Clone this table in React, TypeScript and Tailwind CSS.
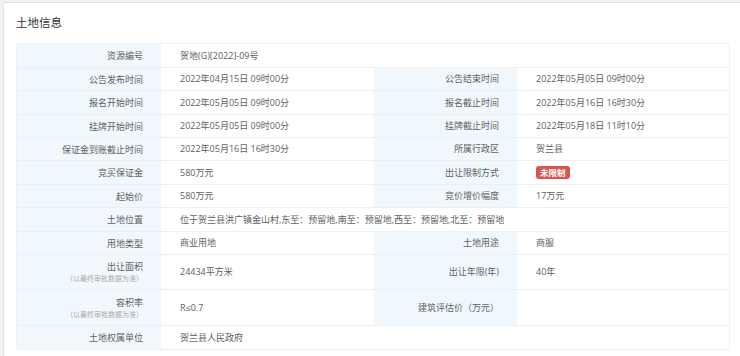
import React from "react";

type Cell = { label: React.ReactNode; value?: React.ReactNode };

const Note = () => (
  <span className="block text-[7px] leading-[11px] text-[#aaa]">（以最终审批数据为准）</span>
);

const Badge = ({ children }: { children: React.ReactNode }) => (
  <span className="inline-block rounded-[3px] bg-[#d9534f] px-[4px] text-[8.5px] font-bold leading-[13px] text-white">
    {children}
  </span>
);

const rows: { cells: Cell[]; h: string }[] = [
  { cells: [{ label: "资源编号", value: "贺地(G)[2022]-09号" }], h: "h-[24px]" },
  {
    cells: [
      { label: "公告发布时间", value: "2022年04月15日 09时00分" },
      { label: "公告结束时间", value: "2022年05月05日 09时00分" },
    ],
    h: "h-[23px]",
  },
  {
    cells: [
      { label: "报名开始时间", value: "2022年05月05日 09时00分" },
      { label: "报名截止时间", value: "2022年05月16日 16时30分" },
    ],
    h: "h-[24px]",
  },
  {
    cells: [
      { label: "挂牌开始时间", value: "2022年05月05日 09时00分" },
      { label: "挂牌截止时间", value: "2022年05月18日 11时10分" },
    ],
    h: "h-[23px]",
  },
  {
    cells: [
      { label: "保证金到账截止时间", value: "2022年05月16日 16时30分" },
      { label: "所属行政区", value: "贺兰县" },
    ],
    h: "h-[23px]",
  },
  {
    cells: [
      { label: "竞买保证金", value: "580万元" },
      { label: "出让限制方式", value: <Badge>未限制</Badge> },
    ],
    h: "h-[24px]",
  },
  {
    cells: [
      { label: "起始价", value: "580万元" },
      { label: "竞价增价幅度", value: "17万元" },
    ],
    h: "h-[23px]",
  },
  {
    cells: [{ label: "土地位置", value: "位于贺兰县洪广镇金山村,东至：预留地,南至：预留地,西至：预留地,北至：预留地" }],
    h: "h-[24px]",
  },
  {
    cells: [
      { label: "用地类型", value: "商业用地" },
      { label: "土地用途", value: "商服" },
    ],
    h: "h-[23px]",
  },
  {
    cells: [
      {
        label: (
          <>
            <span className="block">出让面积</span>
            <Note />
          </>
        ),
        value: "24434平方米",
      },
      { label: "出让年限(年)", value: "40年" },
    ],
    h: "h-[35px]",
  },
  {
    cells: [
      {
        label: (
          <>
            <span className="block">容积率</span>
            <Note />
          </>
        ),
        value: "R≤0.7",
      },
      { label: "建筑评估价（万元）", value: "" },
    ],
    h: "h-[36px]",
  },
  { cells: [{ label: "土地权属单位", value: "贺兰县人民政府" }], h: "h-[24px]" },
];

export default function App() {
  return (
    <div
      className="h-[356px] w-[740px] overflow-hidden bg-[#f2f2f2] pl-[3px] pt-[2px] text-[#606060]"
      style={{ fontFamily: '"Open Sans", "Noto Sans CJK SC", sans-serif' }}
    >
      <div className="h-full border-l border-t border-[#e3e3e3] bg-white pl-[12px] pr-[10px]">
        <h2 className="flex h-[40px] items-center text-[11.5px] text-[#333]">土地信息</h2>
        <div className="border-x border-t border-[#f0f0f0] text-[9px]">
          {rows.map((row, i) => (
            <div
              key={i}
              className={`grid grid-cols-[144px_213px_143px_1fr] border-b border-[#eeeeee] ${row.h}`}
            >
              <div className="flex flex-col items-end justify-center bg-[#f1f8fd] pr-[18px] text-right leading-[13px]">
                {row.cells[0].label}
              </div>
              {row.cells.length === 1 ? (
                <div className="col-span-3 flex items-center pl-[19px]">{row.cells[0].value}</div>
              ) : (
                <>
                  <div className="flex items-center pl-[19px]">{row.cells[0].value}</div>
                  <div className="flex items-center justify-end bg-[#f1f8fd] pr-[18px]">{row.cells[1].label}</div>
                  <div className="flex items-center pl-[19px]">{row.cells[1].value}</div>
                </>
              )}
            </div>
          ))}
        </div>
      </div>
    </div>
  );
}
